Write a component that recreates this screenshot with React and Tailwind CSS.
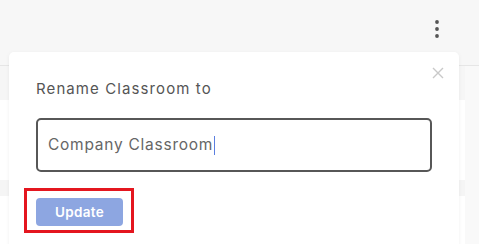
export default function App() {
  return (
    <div
      className="relative w-[479px] h-[244px] overflow-hidden bg-white flex flex-col"
      style={{ fontFamily: 'Inter, "Noto Sans", sans-serif' }}
    >
      {/* page behind the dialog */}
      <div className="h-[66px] shrink-0 bg-[#f7f7f7] border-b border-[#e6e6e6] flex justify-end items-start">
        <svg width="10" height="24" viewBox="0 0 10 24" className="mt-[17px] mr-[37px]">
          <circle cx="5" cy="5" r="1.9" fill="#555" />
          <circle cx="5" cy="12" r="1.9" fill="#555" />
          <circle cx="5" cy="19" r="1.9" fill="#555" />
        </svg>
      </div>
      <div className="flex flex-1">
        <div className="flex-1 flex flex-col">
          <div className="h-[34px] bg-[#f6f6f6]" />
          <div className="h-[80px] bg-white" />
          <div className="h-[16px] bg-[#f5f5f5]" />
          <div className="flex-1 bg-white" />
        </div>
        <div className="w-[14px] bg-[#f9f9f9]" />
      </div>

      {/* dialog */}
      <div className="absolute left-[9px] top-[52px] w-[450px] h-[210px] bg-white rounded-[5px] shadow-[0_1px_4px_rgba(0,0,0,0.06)] pl-[27px] pt-[27px]">
        <button className="absolute right-[15px] top-[15px] w-[12px] h-[12px]">
          <svg width="12" height="12" viewBox="0 0 12 12">
            <path d="M1 1L11 11M11 1L1 11" stroke="#c9c9c9" strokeWidth="1.4" />
          </svg>
        </button>
        <div className="text-[15px] leading-[20px] text-[#555] tracking-[1.1px]">Rename Classroom to</div>
        <div className="mt-[19px] w-[396px] h-[54px] border-2 border-[#575757] rounded-[5px] flex items-center pl-[10px]">
          <span className="text-[15.5px] text-[#666] tracking-[0.75px]">Company Classroom</span>
          <span className="ml-[1px] w-px h-[19px] bg-[#5b7fe0]" />
        </div>
        <div className="relative mt-[26px] w-[87px]">
          <div className="h-[28px] w-[87px] rounded-[4px] bg-[#8da6e1] flex items-center justify-center text-white font-semibold text-[13.5px] tracking-[0.3px]">
            Update
          </div>
          <div className="absolute left-[-12px] top-[-10px] w-[110px] h-[45px] border-[3px] border-[#e4161f]" />
        </div>
      </div>
    </div>
  );
}
